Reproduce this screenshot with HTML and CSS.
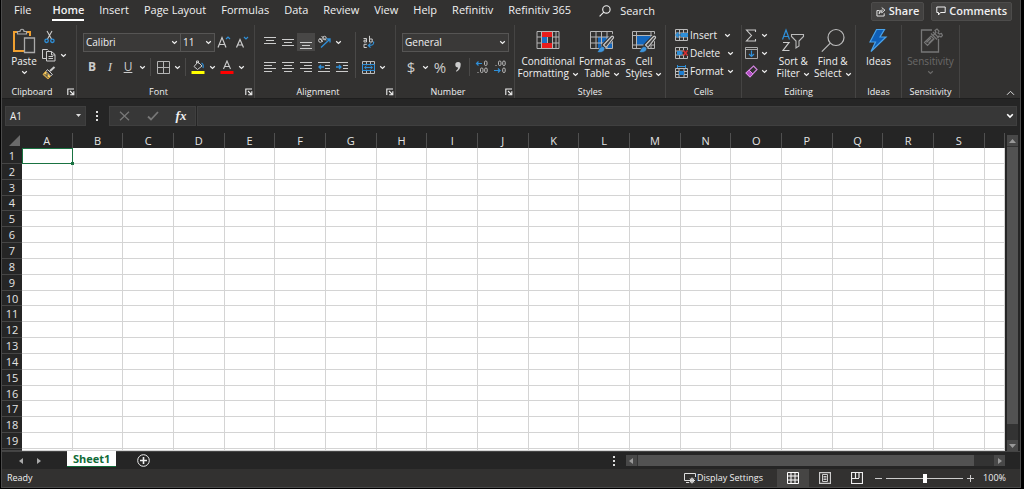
FILE: index.html
```html
<!DOCTYPE html>
<html lang="en">
<head>
<meta charset="utf-8">
<meta name="viewport" content="width=device-width, initial-scale=1">
<title>Sheet1</title>
<link rel="stylesheet" href="styles.css">
</head>
<body>
<svg width="0" height="0" class="defs" aria-hidden="true">
  <symbol id="chev" viewBox="0 0 7 5"><path d="M1.2 1.2 3.5 3.4 5.8 1.2" fill="none" stroke="currentColor" stroke-width="1.2"/></symbol>
  <symbol id="launch" viewBox="0 0 8 8"><path d="M.8 7V1H7M3 3l3 3M6.8 3.2v3.6H3.2" fill="none" stroke="currentColor" stroke-width="1.1"/></symbol>
  <symbol id="brush" viewBox="0 0 26 26"><path d="M25 7.500 14 19" stroke="#323130" stroke-width="5.500"/><path d="M14.500 17 22.500 8.500c1-1 2.700.5 1.800 1.700L17 19.500z" fill="#444" stroke="#ccc" stroke-width="1.100"/><path d="M8 24c2-1 1.500-5 5-5.500 2.500 0 3 2 2.500 3.500-1 2.500-5 3-7.500 2z" fill="#3f96dd" stroke="#323130" stroke-width=".6"/></symbol>
</svg>
<div class="app">
  <header class="tabs">
    <nav class="tab-list" aria-label="Ribbon tabs">
      <button class="tab">File</button>
      <button class="tab tab-active">Home</button>
      <button class="tab">Insert</button>
      <button class="tab">Page Layout</button>
      <button class="tab">Formulas</button>
      <button class="tab">Data</button>
      <button class="tab">Review</button>
      <button class="tab">View</button>
      <button class="tab">Help</button>
      <button class="tab">Refinitiv</button>
      <button class="tab">Refinitiv 365</button>
    </nav>
    <button class="search"><svg width="12" height="12" viewBox="0 0 12 12" fill="none" stroke="currentColor" stroke-width="1.1"><circle cx="7.4" cy="4.4" r="3.7"/><path d="M4.8 7.2.6 11.4"/></svg>Search</button>
    <div class="actions">
      <button class="action"><svg width="10" height="11" viewBox="0 0 11 11" fill="none" stroke="currentColor" stroke-width="1"><path d="M4 4.5H1v6h8V7.500M3.500 8c0-3 1.500-4 4-4M6.300 1.200 9.800 4 6.300 7V5.500C5 5.500 4 6.500 3.500 8"/></svg>Share</button>
      <button class="action"><svg width="10" height="10" viewBox="0 0 10 10" fill="none" stroke="currentColor" stroke-width="1"><path d="M.8 1h8.400v5.500H4.500L2.500 9V6.500H.8z"/></svg>Comments</button>
    </div>
  </header>

  <section class="ribbon">
    <div class="group g-clipboard">
      <div class="body">
        <button class="big big-paste">
          <svg width="24" height="26" viewBox="0 0 24 26" fill="none"><path d="M13 23H2V4h4M14 4h4v4" stroke="#f0a030" stroke-width="2"/><path d="M5.500 6V3.500H8C8 .5 12 .5 12 3.500h2.500V6z" stroke="#aaa" stroke-width="1.200"/><path d="M12.500 10H22.500V24.500H12.500z" fill="#333" stroke="#aaa" stroke-width="1.300"/></svg>
          <span>Paste</span>
          <svg class="chev"><use href="#chev"/></svg>
        </button>
        <div class="col">
          <button class="tool" aria-label="Cut"><svg width="13" height="14" viewBox="0 0 13 14" fill="none"><path d="M4 1l4.500 8M9 1 4.500 9" stroke="#ccc" stroke-width="1.100"/><circle cx="3.600" cy="10.800" r="1.700" stroke="#2f8fd8" stroke-width="1.300"/><circle cx="9.400" cy="10.800" r="1.700" stroke="#2f8fd8" stroke-width="1.300"/></svg></button>
          <div class="pair"><button class="tool" aria-label="Copy"><svg width="14" height="14" viewBox="0 0 14 14" fill="none" stroke="#ccc"><path d="M4.500 10.500h-4V1.500h5l1 1"/><path d="M4.500 3.500h5l3.500 3v6.500H4.500zM9.500 3.500v3.500H13M6.500 8.500h4.500M6.500 10.500h4.500"/></svg></button><button class="drop" aria-label="Copy options"><svg class="chev"><use href="#chev"/></svg></button></div>
          <button class="tool" aria-label="Format Painter"><svg width="14" height="14" viewBox="0 0 14 14" fill="none"><path d="M12.500 1 8 5" stroke="#ccc" stroke-width="2"/><path d="M5.500 3.500l5 5-2 1.500-4.500-4.500z" stroke="#ccc"/><path d="M3.500 5.500 8.500 10.500 6 13 1 8.500z" fill="#f3d06c" stroke="#d9a13c"/><path d="M2.500 8 6.500 12M5 7v3" stroke="#333"/></svg></button>
        </div>
      </div>
      <div class="caption"><span>Clipboard</span><button class="launch" aria-label="Clipboard options"><svg width="8" height="8"><use href="#launch"/></svg></button></div>
    </div>

    <div class="group g-font">
      <div class="body rows">
        <div class="row">
          <button class="combo combo-font">Calibri<svg class="chev"><use href="#chev"/></svg></button><button class="combo combo-size">11<svg class="chev"><use href="#chev"/></svg></button>
          <button class="tool" aria-label="Grow font"><svg width="14" height="14" viewBox="0 0 14 14" fill="none"><path d="M1 12.500 5 2.500 9 12.500M2.500 9.500h5" stroke="#ccc" stroke-width="1.200"/><path d="M9 4l2-2 2 2" stroke="#2f8fd8" stroke-width="1.200"/></svg></button>
          <button class="tool" aria-label="Shrink font"><svg width="14" height="14" viewBox="0 0 14 14" fill="none"><path d="M1.500 12.500 5 4.500 8.500 12.500M3 10h4" stroke="#ccc" stroke-width="1.200"/><path d="M9 2l2 2 2-2" stroke="#2f8fd8" stroke-width="1.200"/></svg></button>
        </div>
        <div class="row">
          <button class="tool glyph bold">B</button><button class="tool glyph italic">I</button><button class="tool glyph under">U</button><button class="drop" aria-label="Underline options"><svg class="chev"><use href="#chev"/></svg></button>
          <i class="sep"></i>
          <button class="tool" aria-label="Borders"><svg width="13" height="13" viewBox="0 0 13 13" fill="none" stroke="#b5b5b5"><path d="M.5.5h12v12H.5zM6.500.5v12M.5 6.500h12"/></svg></button><button class="drop" aria-label="Border options"><svg class="chev"><use href="#chev"/></svg></button>
          <i class="sep"></i>
          <button class="tool" aria-label="Fill color"><svg width="14" height="14" viewBox="0 0 14 14" fill="none"><path d="M3 6.500 7 2l4 4-4.500 3.500zM5.500 3.500V1h2v2.500" stroke="#ccc"/><path d="M10.500 3c2 1 2 3 1.500 5" stroke="#2f8fd8" stroke-width="1.200"/><path d="M.5 11h13v3H.5z" fill="#ff0"/></svg></button><button class="drop" aria-label="Fill options"><svg class="chev"><use href="#chev"/></svg></button>
          <button class="tool" aria-label="Font color"><svg width="14" height="14" viewBox="0 0 14 14" fill="none"><path d="M3.500 9 7 1l3.500 8M4.800 6.500h4.400" stroke="#ccc" stroke-width="1.100"/><path d="M.5 11h13v3H.5z" fill="#f00"/></svg></button><button class="drop" aria-label="Font color options"><svg class="chev"><use href="#chev"/></svg></button>
        </div>
      </div>
      <div class="caption"><span>Font</span><button class="launch" aria-label="Font options"><svg width="8" height="8"><use href="#launch"/></svg></button></div>
    </div>

    <div class="group g-align">
      <div class="body split">
        <div class="rows">
          <div class="row">
            <button class="tool" aria-label="Top align"><svg class="lines" width="12" height="13" viewBox="0 0 12 13"><path d="M0 1.500h12M2 4.500h8M0 7.500h12"/></svg></button><button class="tool" aria-label="Middle align"><svg class="lines" width="12" height="13" viewBox="0 0 12 13"><path d="M0 3.500h12M2 6.500h8M0 9.500h12"/></svg></button><button class="tool pressed" aria-label="Bottom align"><svg class="lines" width="12" height="13" viewBox="0 0 12 13"><path d="M0 6.500h12M2 9.500h8M0 12.500h12"/></svg></button><button class="tool" aria-label="Orientation"><svg width="14" height="14" viewBox="0 0 14 14" fill="none"><circle cx="3.400" cy="5.500" r="1.800" stroke="#ccc"/><path d="M2.500 3.500 5.800 6.800M4.500 1 9 5.500" stroke="#ccc"/><circle cx="7.500" cy="3" r="1.700" stroke="#ccc"/><path d="M4 12.500 12.500 4.500M9.500 4h3.500v3.500" stroke="#2f8fd8" stroke-width="1.300"/></svg></button><button class="drop" aria-label="Orientation options"><svg class="chev"><use href="#chev"/></svg></button>
          </div>
          <div class="row">
            <button class="tool" aria-label="Align left"><svg class="lines" width="12" height="13" viewBox="0 0 12 13"><path d="M0 1.500h12M0 4.500h8M0 7.500h12M0 10.500h8"/></svg></button><button class="tool" aria-label="Center"><svg class="lines" width="12" height="13" viewBox="0 0 12 13"><path d="M0 1.500h12M2 4.500h8M0 7.500h12M2 10.500h8"/></svg></button><button class="tool" aria-label="Align right"><svg class="lines" width="12" height="13" viewBox="0 0 12 13"><path d="M0 1.500h12M4 4.500h8M0 7.500h12M4 10.500h8"/></svg></button><button class="tool" aria-label="Decrease indent"><svg class="lines" width="12" height="13" viewBox="0 0 12 13"><path d="M0 1.500h12M7 4.500h5M7 7.500h5M0 10.500h12"/><path class="blue" d="M6 6H1M3 4 1 6l2 2"/></svg></button><button class="tool" aria-label="Increase indent"><svg class="lines" width="12" height="13" viewBox="0 0 12 13"><path d="M0 1.500h12M7 4.500h5M7 7.500h5M0 10.500h12"/><path class="blue" d="M0 6h5M3 4l2 2-2 2"/></svg></button>
          </div>
        </div>
        <i class="sep sep-tall"></i>
        <div class="rows">
          <div class="row"><button class="tool" aria-label="Wrap text"><svg width="13" height="14" viewBox="0 0 13 14" fill="none" stroke="#ccc"><path d="M1.500 3.500h3v3.500H2V5.200h2.500M7.500.8V7M7.500 4h2.700v3H7.500M4.800 9.300H2v3.200h2.800"/><path d="M11.500 6.500c1 3-1 4-5 4M8.500 8.300l-2.200 2.200 2.200 2.200" stroke="#2f8fd8" stroke-width="1.200"/></svg></button></div>
          <div class="row"><button class="tool" aria-label="Merge"><svg width="13" height="13" viewBox="0 0 13 13" fill="none"><path d="M.5.5h12v12H.5zM4.500.5v12M8.500.5v12" stroke="#bbb"/><path d="M.5 3.500h12v6H.5z" fill="#333" stroke="#2f8fd8"/><path d="M2.500 6.500h8M4.500 4.800 2.700 6.500l1.800 1.700M8.500 4.800l1.800 1.700-1.800 1.700" stroke="#2f8fd8"/></svg></button><button class="drop" aria-label="Merge options"><svg class="chev"><use href="#chev"/></svg></button></div>
        </div>
      </div>
      <div class="caption"><span>Alignment</span><button class="launch" aria-label="Alignment options"><svg width="8" height="8"><use href="#launch"/></svg></button></div>
    </div>

    <div class="group g-number">
      <div class="body rows">
        <div class="row"><button class="combo combo-number">General<svg class="chev"><use href="#chev"/></svg></button></div>
        <div class="row">
          <button class="tool glyph money">$</button><button class="drop" aria-label="Currency options"><svg class="chev"><use href="#chev"/></svg></button><button class="tool glyph money">%</button><button class="tool" aria-label="Comma style"><svg width="8" height="12" viewBox="0 0 8 12"><path d="M4 1a2.600 2.600 0 0 1 2.700 2.800C6.700 7 5 9.300 2.500 10.800L2 10c1.400-1.200 2-2.300 2.100-3.500A2.700 2.700 0 1 1 4 1z" fill="#ccc"/></svg></button>
          <i class="sep"></i>
          <button class="tool" aria-label="Increase decimal"><svg width="14" height="14" viewBox="0 0 14 14" fill="none" stroke="#bbb"><rect x="9.500" y="1" width="2.500" height="4.500" rx="1.200"/><rect x="5.500" y="8" width="2.500" height="4.500" rx="1.200"/><rect x="9.700" y="8" width="2.500" height="4.500" rx="1.200"/><path d="M3 12v1"/><path d="M7 3.500H1.500M3.500 1.500l-2 2 2 2" stroke="#2f8fd8" stroke-width="1.200"/></svg></button><button class="tool" aria-label="Decrease decimal"><svg width="14" height="14" viewBox="0 0 14 14" fill="none" stroke="#bbb"><rect x="5.500" y="1" width="2.500" height="4.500" rx="1.200"/><rect x="9.700" y="1" width="2.500" height="4.500" rx="1.200"/><rect x="9.700" y="8" width="2.500" height="4.500" rx="1.200"/><path d="M3 5v1"/><path d="M1 10.500h6M5 8.500l2 2-2 2" stroke="#2f8fd8" stroke-width="1.200"/></svg></button>
        </div>
      </div>
      <div class="caption"><span>Number</span><button class="launch" aria-label="Number options"><svg width="8" height="8"><use href="#launch"/></svg></button></div>
    </div>

    <div class="group g-styles">
      <div class="body bigs">
        <button class="big">
          <svg width="24" height="26" viewBox="0 0 24 26"><path d="M5.500 3h11v6h-11zM5.500 15h11v6h-11z" fill="#e81c1c"/><path d="M5.500 9h6v6h-6z" fill="#1a6fc4"/><path d="M1 3.500h22v17H1zM1 9h4.500M16.500 9H23M1 15h4.500M16.500 15H23M5.500 3v18M16.500 3v18M20 3v18M11.500 9v6" fill="none" stroke="#b5b5b5"/></svg>
          <span>Conditional<br>Formatting<svg class="chev"><use href="#chev"/></svg></span>
        </button>
        <button class="big">
          <svg width="26" height="26" viewBox="0 0 26 26"><path d="M9 9h14v12H9z" fill="#1467bd"/><path d="M1.500 3.500h22v17h-22zM1.500 9h22M1.500 15h22M7 3.500v17M12.500 3.500v17M18 3.500v17" fill="none" stroke="#b5b5b5"/><use href="#brush"/></svg>
          <span>Format as<br>Table<svg class="chev"><use href="#chev"/></svg></span>
        </button>
        <button class="big">
          <svg width="26" height="26" viewBox="0 0 26 26"><path d="M6 8h14v9H6z" fill="#1467bd"/><path d="M1.500 3.500h22v17h-22zM1.500 7.500h22M1.500 17h22M5.500 3.500v17M20 3.500v17" fill="none" stroke="#b5b5b5"/><use href="#brush"/></svg>
          <span>Cell<br>Styles<svg class="chev"><use href="#chev"/></svg></span>
        </button>
      </div>
      <div class="caption"><span>Styles</span></div>
    </div>

    <div class="group g-cells">
      <div class="body list">
        <button class="item"><svg width="13" height="12" viewBox="0 0 13 12" fill="none"><path d="M.5.5h12v11H.5zM.5 4h12M.5 8h12M4.500.5v11M8.500.5v11" stroke="#bbb"/><path d="M6 4h7v4H6z" fill="#2f8fd8"/><path d="M7 6H1M3.500 3.500 1 6l2.500 2.500" stroke="#2f8fd8" stroke-width="1.500"/></svg><span>Insert</span><svg class="chev"><use href="#chev"/></svg></button>
        <button class="item"><svg width="13" height="12" viewBox="0 0 13 12" fill="none"><path d="M12.500 3V.5H.5v11h12V9M.5 4h8M.5 8h8M4.500.5v3M8.500.5v3M4.500 8v3.500M8.500 8v3.500" stroke="#bbb"/><path d="M2 4h4l2 2-2 2H2z" fill="#2f8fd8"/><path d="M8.500 3.500l4 5M12.500 3.500l-4 5" stroke="#e03030" stroke-width="1.400"/></svg><span>Delete</span><svg class="chev"><use href="#chev"/></svg></button>
        <button class="item item-tight"><svg width="13" height="13" viewBox="0 0 13 13" fill="none"><path d="M.5 3.500h12v9H.5zM.5 6.500h12M.5 9.500h12M4 3.500v9M9 3.500v9" stroke="#bbb"/><path d="M4 6h5v4H4z" fill="#1f7ed0"/><path d="M3 1.500h7M2.500 0v3M10.500 0v3" stroke="#2f8fd8"/></svg><span>Format</span><svg class="chev"><use href="#chev"/></svg></button>
      </div>
      <div class="caption"><span>Cells</span></div>
    </div>

    <div class="group g-edit">
      <div class="body bigs">
        <div class="col">
          <button class="item item-tight" aria-label="AutoSum"><svg width="13" height="13" viewBox="0 0 13 13" fill="none"><path d="M10.500 3V1H1.500l5 5.500-5 5.500h9V10" stroke="#ccc" stroke-width="1.100"/></svg><svg class="chev"><use href="#chev"/></svg></button>
          <button class="item item-tight" aria-label="Fill"><svg width="13" height="12" viewBox="0 0 13 12" fill="none"><path d="M.5.500h12v11H.5zM.5 2.500h12" stroke="#aaa"/><path d="M6.500 3.500v6M4 7l2.500 2.500L9 7" stroke="#2f8fd8" stroke-width="1.200"/></svg><svg class="chev"><use href="#chev"/></svg></button>
          <button class="item item-tight" aria-label="Clear"><svg width="13" height="13" viewBox="0 0 13 13" fill="none"><path d="M8.500 1 12 4.500 5 12 1 8z" stroke="#cf80dc" stroke-width="1.200"/><path d="M4 5l4 4L5 12 1 8z" fill="#b34fc4" stroke="#d890e4"/></svg><svg class="chev"><use href="#chev"/></svg></button>
        </div>
        <button class="big">
          <svg width="24" height="26" viewBox="0 0 24 26" fill="none"><path d="M1.500 11.500 5 2l3.500 9.500M2.800 8.500h4.400" stroke="#2f8fd8" stroke-width="1.200"/><path d="M2 14.500h6l-6 8h6.500" stroke="#ccc" stroke-width="1.200"/><path d="M10.500 6.500h12v2l-4.500 4.500v5l-3 2v-7L10.500 8.500z" stroke="#bbb" stroke-width="1.100"/></svg>
          <span>Sort &amp;<br>Filter<svg class="chev"><use href="#chev"/></svg></span>
        </button>
        <button class="big">
          <svg width="24" height="26" viewBox="0 0 24 26" fill="none" stroke="#bbb" stroke-width="1.200"><circle cx="15" cy="9.500" r="8"/><path d="M9.300 15.200.8 23.700"/></svg>
          <span>Find &amp;<br>Select<svg class="chev"><use href="#chev"/></svg></span>
        </button>
      </div>
      <div class="caption"><span>Editing</span></div>
    </div>

    <div class="group g-ideas">
      <div class="body bigs">
        <button class="big"><svg width="24" height="26" viewBox="0 0 24 26"><path d="M10.500 1.500h8L14 9h6L5 23.500l4.500-9.500H4z" fill="#0f5fb8" stroke="#4aa3ea" stroke-width="1.200"/></svg><span>Ideas</span></button>
      </div>
      <div class="caption"><span>Ideas</span></div>
    </div>

    <div class="group g-sens">
      <div class="body bigs">
        <button class="big" disabled><svg width="24" height="26" viewBox="0 0 24 26" fill="none" stroke="#777"><path d="M13 2H2.500v22h17V11" stroke-width="1.300"/><path d="M5.500 14.500 12 8l3 3-6.500 6.500zM7.500 14.500 12 10M9.500 15.500l4-4M12 5.500l6 6M14 4l6 6M14.500 7 17 4.500 16 2.500l2-1.500 2 2-1 2 1.500 1 2-.5 1 2-1.500 1.500-2-1-2 2" stroke-width="1.200"/></svg><span>Sensitivity</span><svg class="chev"><use href="#chev"/></svg></button>
      </div>
      <div class="caption"><span>Sensitivity</span></div>
    </div>
    <button class="collapse" aria-label="Collapse ribbon"><svg width="9" height="6" viewBox="0 0 9 6"><path d="M1 4.800 4.500 1.300 8 4.800" fill="none" stroke="#ddd"/></svg></button>
  </section>

  <section class="formula">
    <button class="field name-box">A1<svg width="7" height="4" viewBox="0 0 7 4"><path d="M1 0h5L3.500 3z" fill="#ddd"/></svg></button>
    <svg class="dots" width="3" height="10" viewBox="0 0 3 10"><path d="M0 0h2v2H0zM0 4h2v2H0zM0 8h2v2H0z" fill="#ddd"/></svg>
    <div class="field fx">
      <button aria-label="Cancel"><svg width="11" height="10" viewBox="0 0 11 10"><path d="M1 .8l9 8.400M10 .8 1 9.200" stroke="#777" stroke-width="1.300"/></svg></button>
      <button aria-label="Enter"><svg width="12" height="10" viewBox="0 0 12 10"><path d="M1 5.500 4 8.500 11 1" fill="none" stroke="#777" stroke-width="1.800"/></svg></button>
      <button class="fx-mark">fx</button>
    </div>
    <div class="field entry"><input type="text" aria-label="Formula bar"><button aria-label="Expand formula bar"><svg width="8" height="6" viewBox="0 0 8 6"><path d="M1.200 1.200 4 4l2.800-2.800" fill="none" stroke="#fff" stroke-width="1.600"/></svg></button></div>
  </section>

  <main class="sheet">
    <table class="cells" id="cells"></table>
    <div class="vscroll">
      <button aria-label="Scroll up"><svg width="7" height="4" viewBox="0 0 7 4"><path d="M0 4h7L3.500 0z" fill="#999"/></svg></button>
      <div class="thumb"></div><div class="track"></div>
      <button aria-label="Scroll down"><svg width="7" height="4" viewBox="0 0 7 4"><path d="M0 0h7L3.500 4z" fill="#999"/></svg></button>
    </div>
  </main>

  <section class="sheetbar">
    <button class="arrow" aria-label="Previous sheet"><svg width="4" height="6" viewBox="0 0 4 6"><path d="M4 0v6L0 3z" fill="#aaa"/></svg></button>
    <button class="arrow" aria-label="Next sheet"><svg width="4" height="6" viewBox="0 0 4 6"><path d="M0 0v6l4-3z" fill="#aaa"/></svg></button>
    <button class="sheet-tab">Sheet1</button>
    <button class="add" aria-label="New sheet"><svg width="13" height="13" viewBox="0 0 13 13" fill="none" stroke="#eee"><circle cx="6.500" cy="6.500" r="5.800"/><path d="M6.500 3v7M3 6.500h7" stroke-width="1.600"/></svg></button>
    <div class="hscroll-area">
      <svg class="dots" width="3" height="10" viewBox="0 0 3 10"><path d="M0 0h2v2H0zM0 4h2v2H0zM0 8h2v2H0z" fill="#ddd"/></svg>
      <div class="hscroll">
        <button aria-label="Scroll left"><svg width="4" height="6" viewBox="0 0 4 6"><path d="M4 0v6L0 3z" fill="#999"/></svg></button>
        <div class="thumb"></div><div class="track"></div>
        <button aria-label="Scroll right"><svg width="4" height="6" viewBox="0 0 4 6"><path d="M0 0v6l4-3z" fill="#999"/></svg></button>
      </div>
    </div>
  </section>

  <footer class="status">
    <span class="ready">Ready</span>
    <button class="display"><svg width="12" height="11" viewBox="0 0 12 11" fill="none" stroke="#ddd"><path d="M5 7.500H.5v-7h11V4M2 9.500h3"/><circle cx="8" cy="7.500" r="1.800"/><path d="M8 4.500v6M5 7.500h6M6 5.500l4 4M10 5.500l-4 4"/></svg>Display Settings</button>
    <button class="view view-on" aria-label="Normal"><svg width="12" height="12" viewBox="0 0 12 12" fill="none" stroke="#fff"><path d="M.5.5h11v11H.5zM.5 4h11M.5 8h11M4 .5v11M8 .5v11"/></svg></button>
    <button class="view" aria-label="Page layout"><svg width="12" height="12" viewBox="0 0 12 12" fill="none" stroke="#ccc"><path d="M.5.5h11v11H.5z" stroke-width="1.300"/><path d="M3.500 2.500h5v7h-5zM4.500 4.500h3M4.500 6h3M4.500 7.500h3"/></svg></button>
    <button class="view" aria-label="Page break preview"><svg width="12" height="12" viewBox="0 0 12 12" fill="none" stroke="#eee"><path d="M.5.5h11v11H.5zM4.500 0v6M8 0v6M.5 6.500H8" stroke-width="1.200"/></svg></button>
    <div class="zoom">
      <button aria-label="Zoom out"><svg width="7" height="7" viewBox="0 0 7 7"><path d="M0 3.500h7" stroke="#ccc"/></svg></button>
      <input type="range" min="0" max="100" value="50" aria-label="Zoom">
      <button aria-label="Zoom in"><svg width="7" height="7" viewBox="0 0 7 7"><path d="M0 3.500h7M3.500 0v7" stroke="#ccc"/></svg></button>
      <span class="percent">100%</span>
    </div>
  </footer>
</div>
<script src="sheet.js"></script>
</body>
</html>
```

FILE: styles.css
```css
* { box-sizing: border-box; }
body { margin: 0; background: #000; color: #f0f0f0; font: 10px/12px "Open Sans", "Noto Sans", sans-serif; }
button, input { margin: 0; padding: 0; border: 0; background: none; color: inherit; font: inherit; }
button { display: flex; align-items: center; justify-content: center; white-space: nowrap; }
svg { display: block; flex: none; }
.defs { position: absolute; }
.chev { width: 7px; height: 5px; display: inline-block; vertical-align: middle; }

.app { display: flex; flex-direction: column; height: calc(100vh - 1px); margin: 0 3px 0 1px; border: solid #4a4a4a; border-width: 0 1px 1px; background: #323130; }

.tabs { display: flex; align-items: center; height: 25px; padding-bottom: 3px; font-size: 11px; line-height: 14px; }
.tab-list { display: flex; gap: 15px; padding-left: 12px; }
.tab { height: 20px; border-bottom: 2px solid transparent; }
.tab-active { margin-left: 6px; font-weight: 600; border-color: #fff; }
.search { gap: 9px; margin-left: 28px; }
.actions { display: flex; gap: 7px; margin-left: auto; padding-right: 8px; }
.action { height: 19px; gap: 3px; padding: 0 4px; border: 1px solid #4d4c4b; border-radius: 2px; background: #424140; font-weight: 600; }

.ribbon { display: flex; height: 74px; border-bottom: 1px solid #1e1e1e; }
.group { display: flex; flex-direction: column; flex: none; border-right: 1px solid #454443; }
.g-clipboard { width: 75px; }
.g-font { width: 178px; }
.g-align { width: 141px; }
.g-number { width: 119px; }
.g-styles { width: 151px; }
.g-cells { width: 76px; }
.g-edit { width: 114px; }
.g-ideas { width: 46px; }
.g-sens { width: 58px; }
.body { display: flex; flex: 1; padding: 3px 0 0 6px; }
.caption { display: flex; align-items: center; height: 13px; font-size: 9px; }
.caption span { flex: 1; text-align: center; }
.launch { justify-content: flex-end; width: 14px; height: 10px; padding-right: 1px; }

.rows { flex-direction: column; gap: 5px; }
.split .rows { display: flex; }
.body.rows, .body.split { padding-top: 7px; }
.row { display: flex; align-items: center; height: 20px; }
.tool { width: 18px; height: 18px; }
.drop { width: 11px; height: 18px; }
.pressed { background: #484746; }
.sep { width: 1px; height: 18px; margin: 0 3px 0 2px; background: #4a4948; }
.sep-tall { height: 46px; margin: 0 3px 0 4px; }
.glyph { font-size: 12px; color: #ccc; }
.bold { font-weight: 700; }
.italic { font-style: italic; font-family: "Liberation Serif", serif; font-size: 13px; }
.under { text-decoration: underline; }
.money { font-size: 15px; }
.lines { fill: none; stroke: #ccc; }
.lines .blue { stroke: #2f8fd8; stroke-width: 1.3; }
.combo { height: 19px; justify-content: space-between; padding: 0 2px; border: 1px solid #565554; background: #3a3938; }
.combo-font { width: 98px; }
.combo-size { width: 35px; margin-left: -1px; }
.combo-number { width: 107px; }

.big { flex-direction: column; justify-content: flex-start; text-align: center; }
.big > svg:first-child { margin-bottom: 1px; }
.big > .chev { margin-top: 3px; }
.big span .chev { margin-left: 3px; }
.big:disabled { color: #6b6a69; }
.big-paste { width: 32px; }
.col { display: flex; flex-direction: column; }
.pair { display: flex; }
.body.bigs { justify-content: center; gap: 2px; padding-left: 0; }
.g-styles .bigs { gap: 0; }
.g-edit .bigs { gap: 4px; }
.g-edit .col { padding-right: 4px; }
.body.list { flex-direction: column; padding-left: 9px; }
.body.list, .g-edit .col { margin-top: -2px; }
.item { justify-content: flex-start; height: 18px; gap: 2px; }
.list .item { width: 64px; }
.item > .chev { margin-left: 5px; }
.item-tight > .chev { margin-left: 1px; }
.collapse { margin: auto 5px 2px auto; }

.formula { display: flex; align-items: center; height: 34px; padding: 0 3px 0 3px; background: #252525; }
.field { display: flex; align-items: center; height: 20px; border: 1px solid #3f3f3f; background: #373737; }
.name-box { width: 81px; justify-content: space-between; padding: 0 3px 0 4px; }
.formula > .dots { margin: 0 10px; }
.fx { width: 87px; justify-content: space-around; }
.fx-mark { font: italic 700 13px/14px "Liberation Serif", serif; }
.entry { flex: 1; margin-left: 1px; padding-right: 2px; }
.entry input { flex: 1; min-width: 0; }

.sheet { display: flex; flex: 1; min-height: 0; background: #252525; }
.cells { display: grid; flex: 1; min-width: 0; grid-template-columns: 20px repeat(19, 5fr) 2fr; grid-template-rows: 15px repeat(19, minmax(0, 8fr)) minmax(0, 1fr); overflow: hidden; }
.cells tbody, .cells tr { display: contents; }
.cells th, .cells td { min-width: 0; min-height: 0; padding: 0; }
.cells th { display: flex; align-items: center; justify-content: center; overflow: hidden; background: #252525; font-size: 11px; font-weight: 400; line-height: 13px; color: #e4e4e4; border-right: 1px solid #505050; }
.cells tbody th[scope="row"] { border-right: 0; border-bottom: 1px solid #454545; }
.cells td { background: #fff; border: solid #d4d4d4; border-width: 0 1px 1px 0; }
.cells td.selected { position: relative; outline: 1px solid #1a7342; outline-offset: -1px; border-color: #1a7342; z-index: 1; }
.cells td.selected::after { content: ""; position: absolute; right: -2px; bottom: -2px; width: 3px; height: 3px; background: #1a7342; }
.cells .corner { justify-content: flex-end; align-items: flex-end; padding: 0 2px 2px 0; border-right: 0; }

.vscroll { display: flex; flex-direction: column; width: 11px; margin: 2px 2px 0 2px; background: #333; }
.vscroll button, .hscroll button { flex: none; width: 11px; height: 11px; background: #484848; }
.vscroll .thumb { flex: 277; margin-top: 1px; background: #525252; }
.vscroll .track { flex: 16; }

.sheetbar { display: flex; height: 18px; background: #252525; border-top: 1px solid #444; }
.arrow { width: 18px; height: 17px; }
.arrow:first-child { margin-left: 10px; }
.sheet-tab { height: 16px; margin: -1px 0 0 19px; padding: 0 6px; background: #fff; color: #0f6b38; font-size: 11px; font-weight: 700; border-bottom: 1px solid #0f6b38; }
.add { margin-left: 21px; }
.hscroll-area { display: flex; align-items: center; flex: 0 0 40%; margin-left: auto; padding-right: 15px; }
.hscroll { display: flex; flex: 1; margin-left: 10px; background: #333; }
.hscroll .thumb { flex: 338; margin-left: 1px; background: #525252; }
.hscroll .track { flex: 20; }

.status { display: flex; align-items: center; height: 18px; font-size: 9px; }
.ready { margin-right: auto; padding-left: 5px; }
.display { gap: 1px; margin-right: 14px; }
.view { width: 32px; height: 18px; }
.view-on { background: #464544; }
.zoom { display: flex; align-items: center; width: 147px; padding: 0 14px 0 2px; }
.zoom input { flex: 1; min-width: 0; height: 12px; margin: 0 4px; appearance: none; background: linear-gradient(#ccc, #ccc) center / 100% 1px no-repeat; }
.zoom input::-webkit-slider-thumb { appearance: none; width: 4px; height: 9px; background: #fff; }
.percent { margin-left: 9px; }
```

FILE: sheet.js
```js
const columns = "ABCDEFGHIJKLMNOPQRS".split("");
const table = document.getElementById("cells");

const head = columns.map((name) => `<th scope="col">${name}</th>`).join("");
const corner = '<th class="corner" aria-label="Select all"><svg width="11" height="11" viewBox="0 0 11 11"><path d="M11 0v11H0z" fill="#6a6a6a"/></svg></th>';

let rows = `<tbody><tr>${corner}${head}<th></th></tr>`;
for (let r = 1; r <= 20; r++) {
  const label = r < 20 ? r : "";
  rows += `<tr><th scope="row">${label}</th>`;
  for (let c = 0; c < 20; c++) {
    rows += r === 1 && c === 0 ? '<td class="selected"></td>' : "<td></td>";
  }
  rows += "</tr>";
}
table.innerHTML = rows + "</tbody>";
```
